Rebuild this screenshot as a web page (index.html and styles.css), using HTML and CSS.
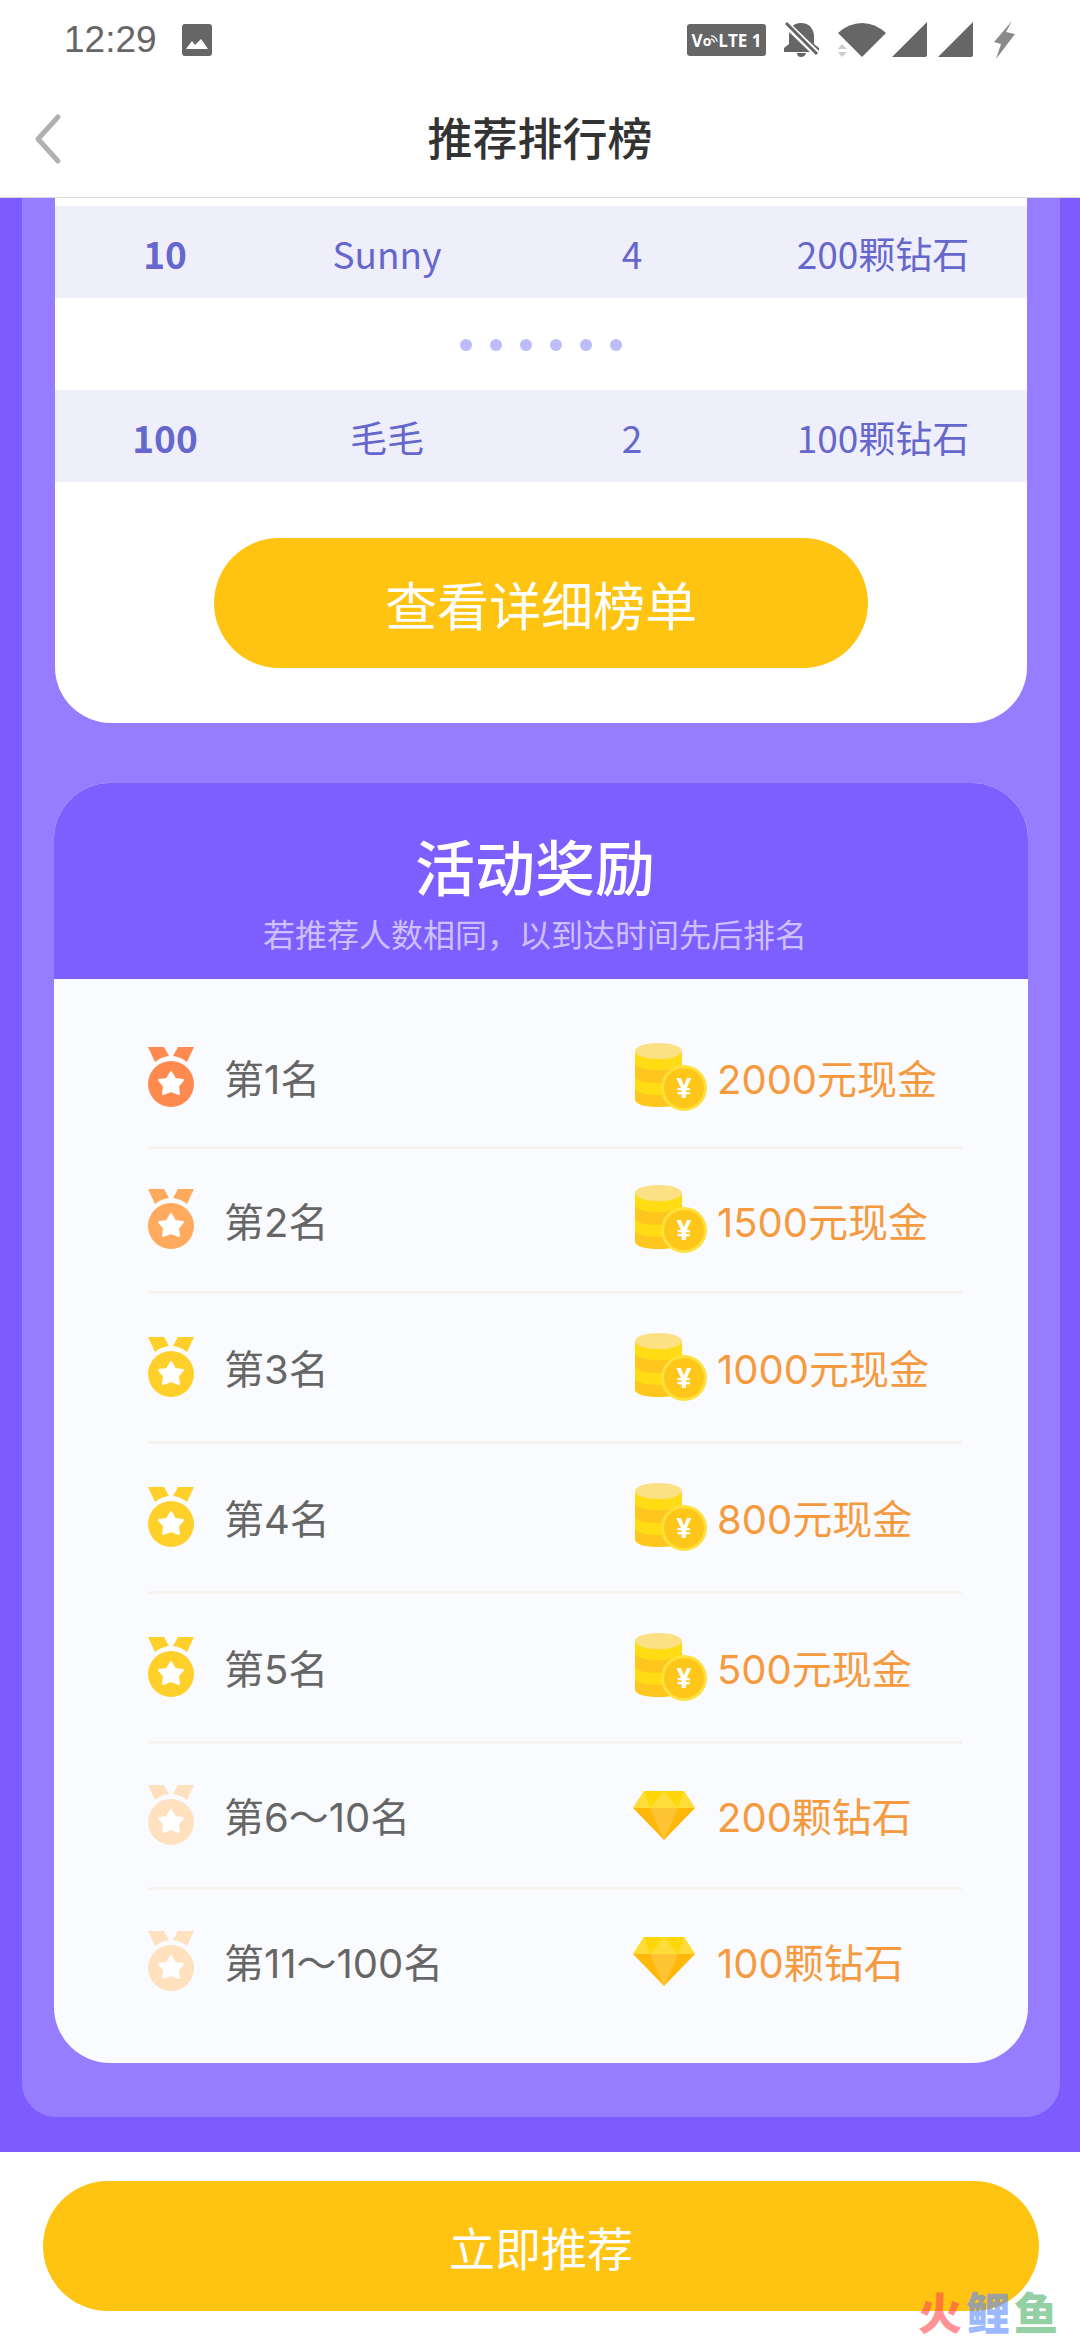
FILE: index.html
```html
<!DOCTYPE html>
<html lang="zh-CN">
<head>
    <meta charset="UTF-8">
    <meta name="viewport" content="width=device-width, initial-scale=1.0">
    <title>推荐排行榜</title>
    <link rel="stylesheet" href="styles.css">
</head>
<body>

    <!-- shared icons -->
    <svg class="sprite" aria-hidden="true">
        <symbol id="medal" viewBox="0 0 46 61">
            <path fill="currentColor" d="M0 0H16L21 9Q13 10 7 15ZM46 0H30L25 9Q33 10 39 15Z"/>
            <circle fill="currentColor" cx="23" cy="37" r="23"/>
            <path class="medal-star" d="M23 25L27 32L35 33L30 39L31 47L23 44L15 47L16 39L11 33L19 32Z"/>
        </symbol>
        <symbol id="coins" viewBox="0 0 76 69">
            <path fill="#ffc61e" d="M2 8V57Q4 64 26 64Q47 64 49 57V8Z"/>
            <path fill="#ffdc14" d="M2 8V20Q4 27 26 27Q47 27 49 20V8ZM2 33Q4 40 26 40Q47 40 49 33V45Q47 52 26 52Q4 52 2 45Z"/>
            <ellipse fill="#fbe184" cx="25.500" cy="8" rx="23.500" ry="8"/>
            <circle fill="#ffe03c" cx="51" cy="45" r="23"/>
            <circle fill="#ffc61a" cx="51" cy="45" r="20"/>
            <text class="coin-sign" x="51" y="55" text-anchor="middle">¥</text>
        </symbol>
        <symbol id="diamond" viewBox="0 0 62 49">
            <path fill="#ffd60a" d="M11 0H51L62 17H0Z"/>
            <path fill="#ffdd38" d="M31 0L45 17H17ZM11 0L17 17H0ZM51 0L62 17H45Z"/>
            <path fill="#ffb70a" d="M0 17H62L31 49Z"/>
            <path fill="#ffc433" d="M17 17H45L31 49Z"/>
        </symbol>
    </svg>

    <div class="status-bar">
        <span class="time">12:29</span>
        <svg class="photo-icon" width="30" height="32" viewBox="0 0 30 32">
            <rect width="30" height="32" rx="3" fill="#666"/>
            <path fill="#fff" d="M4 25L10 17L13 21L19 15L26 25Z"/>
        </svg>
        <div class="status-icons">
            <span class="volte">V<small>o</small><svg width="7" height="14" viewBox="0 0 8 14">
                <path fill="none" stroke="#fff" stroke-width="1.500" d="M0 6Q3 6 4 10M0 2Q6 3 7 9"/>
            </svg>LTE 1</span>
            <svg class="bell" width="36" height="36" viewBox="0 0 36 36">
                <path fill="#666" d="M0 30V26L5 22V13Q6 1 17 1Q28 1 30 13V22L35 26V30ZM13 31H22Q21 35 17 35Q13 35 13 31Z"/>
                <path stroke="#fff" stroke-width="7" d="M0 0L35 34"/>
                <path stroke="#666" stroke-width="3" d="M2 1L33 32"/>
            </svg>
            <svg class="wifi" width="48" height="36" viewBox="0 0 48 36">
                <path fill="#666" d="M0 11Q11 1 24 1Q37 1 48 11L24 35Z"/>
                <path fill="#ccc" d="M0 27L4 22L9 27ZM0 30H9L4 35Z"/>
            </svg>
            <svg class="signal" width="36" height="36" viewBox="0 0 36 36">
                <path fill="#666" d="M35 0V33Q35 35 33 35H0Z"/>
            </svg>
            <svg class="signal" width="36" height="36" viewBox="0 0 36 36">
                <path fill="#666" d="M35 0V33Q35 35 33 35H0Z"/>
            </svg>
            <svg class="bolt" width="24" height="38" viewBox="0 0 24 38">
                <path fill="#8a8a8a" d="M20 0L2 21L9 23L4 38L23 13L14 11Z"/>
            </svg>
        </div>
    </div>

    <header class="nav">
        <button class="back" type="button" aria-label="返回">
            <svg width="28" height="52" viewBox="0 0 28 52">
                <path fill="none" stroke="#b0b0b0" stroke-width="5" stroke-linecap="round" stroke-linejoin="round" d="M24 4L4 26L24 48"/>
            </svg>
        </button>
        <h1>推荐排行榜</h1>
    </header>

    <main class="page">
        <div class="panel">
            <section class="board">
                <table class="ranking">
                    <tr class="striped">
                        <th scope="row">10</th>
                        <td>Sunny</td>
                        <td>4</td>
                        <td>200颗钻石</td>
                    </tr>
                    <tr>
                        <td colspan="4">
                            <div class="dots"><i></i><i></i><i></i><i></i><i></i><i></i></div>
                        </td>
                    </tr>
                    <tr class="striped">
                        <th scope="row">100</th>
                        <td>毛毛</td>
                        <td>2</td>
                        <td>100颗钻石</td>
                    </tr>
                </table>
                <button class="btn btn-detail" type="button">查看详细榜单</button>
            </section>

            <section class="rewards">
                <div class="rewards-head">
                    <h2>活动奖励</h2>
                    <p>若推荐人数相同，以到达时间先后排名</p>
                </div>
                <table class="prizes">
                    <tr>
                        <td><div class="rank"><svg class="medal first"><use href="#medal"/></svg>第1名</div></td>
                        <td><div class="prize"><svg class="coins"><use href="#coins"/></svg>2000元现金</div></td>
                    </tr>
                    <tr>
                        <td><div class="rank"><svg class="medal second"><use href="#medal"/></svg>第2名</div></td>
                        <td><div class="prize"><svg class="coins"><use href="#coins"/></svg>1500元现金</div></td>
                    </tr>
                    <tr>
                        <td><div class="rank"><svg class="medal third"><use href="#medal"/></svg>第3名</div></td>
                        <td><div class="prize"><svg class="coins"><use href="#coins"/></svg>1000元现金</div></td>
                    </tr>
                    <tr>
                        <td><div class="rank"><svg class="medal third"><use href="#medal"/></svg>第4名</div></td>
                        <td><div class="prize"><svg class="coins"><use href="#coins"/></svg>800元现金</div></td>
                    </tr>
                    <tr>
                        <td><div class="rank"><svg class="medal third"><use href="#medal"/></svg>第5名</div></td>
                        <td><div class="prize"><svg class="coins"><use href="#coins"/></svg>500元现金</div></td>
                    </tr>
                    <tr>
                        <td><div class="rank"><svg class="medal other"><use href="#medal"/></svg>第6～10名</div></td>
                        <td><div class="prize"><svg class="diamond"><use href="#diamond"/></svg>200颗钻石</div></td>
                    </tr>
                    <tr>
                        <td><div class="rank"><svg class="medal other"><use href="#medal"/></svg>第11～100名</div></td>
                        <td><div class="prize"><svg class="diamond"><use href="#diamond"/></svg>100颗钻石</div></td>
                    </tr>
                </table>
            </section>
        </div>
    </main>

    <footer class="bottom-bar">
        <button class="btn btn-recommend" type="button">立即推荐</button>
        <div class="watermark"><span class="wm-red">火</span><span class="wm-blue">鲤</span><span class="wm-green">鱼</span></div>
    </footer>

</body>
</html>
```
FILE: styles.css
```css
* {
    box-sizing: border-box;
}

body {
    margin: 0;
    background-color: #fff;
    font-family: "Noto Sans CJK SC", sans-serif;
    color: #333;
}

h1, h2, p {
    margin: 0;
}

button {
    border: none;
    padding: 0;
    background: none;
    font-family: inherit;
    cursor: pointer;
}

svg {
    flex-shrink: 0;
}

table {
    border-collapse: collapse;
    table-layout: fixed;
}

.sprite {
    display: none;
}

/* status bar */
.status-bar {
    display: flex;
    align-items: center;
    height: 80px;
    padding: 0 64px;
}

.time {
    font-family: "Liberation Sans", sans-serif;
    font-size: 37px;
    color: #666;
}

.photo-icon {
    margin-left: 25px;
}

.status-icons {
    display: flex;
    align-items: center;
    margin-left: auto;
}

.volte {
    display: flex;
    align-items: center;
    justify-content: center;
    width: 79px;
    height: 32px;
    border-radius: 3px;
    background-color: #666;
    color: #fff;
    font-family: "Open Sans", sans-serif;
    font-size: 17px;
    font-weight: 700;
    white-space: pre;
}

.volte small {
    font-size: 14px;
}

.bell {
    margin-left: 18px;
}

.wifi {
    margin-left: 18px;
}

.signal {
    margin-left: 6px;
}

.signal + .signal {
    margin-left: 10px;
}

.bolt {
    margin-left: 18px;
}

/* title bar */
.nav {
    display: grid;
    grid-template-columns: 80px 1fr 80px;
    align-items: center;
    height: 118px;
    border-bottom: 1px solid #dcdcdc;
}

.back {
    display: flex;
    padding-left: 34px;
}

.nav h1 {
    padding-bottom: 4px;
    font-size: 45px;
    font-weight: 500;
    line-height: 60px;
    text-align: center;
}

/* purple area */
.page {
    padding: 0 20px 35px 22px;
    background-color: #7d5cff;
}

.panel {
    padding: 0 32px 54px;
    border-radius: 0 0 34px 34px;
    background-color: #967dff;
}

.board {
    margin: 0 1px 60px;
    padding: 8px 0 55px;
    border-radius: 0 0 56px 56px;
    background-color: #fff;
    text-align: center;
}

.ranking {
    width: 100%;
    margin-bottom: 56px;
    font-size: 37px;
    line-height: 52px;
    color: #6567cc;
}

.ranking th,
.ranking td {
    height: 92px;
    padding: 2px 0 0;
}

.ranking th {
    width: 220px;
    font-weight: 700;
}

.ranking td:nth-child(2) {
    width: 224px;
}

.ranking td:nth-child(3) {
    width: 266px;
}

.ranking td:nth-child(4) {
    padding-right: 26px;
}

.striped {
    background-color: #efeffb;
}

.dots {
    display: flex;
    justify-content: center;
    gap: 18px;
}

.dots i {
    width: 12px;
    height: 12px;
    border-radius: 50%;
    background-color: #bcbdfa;
}

.btn {
    height: 130px;
    border-radius: 65px;
    background-color: #ffc312;
    color: #fff;
}

.btn-detail {
    display: block;
    width: 654px;
    max-width: 100%;
    margin: 0 auto;
    font-size: 52px;
}

/* rewards */
.rewards {
    border-radius: 56px;
    background-color: #fafbff;
    overflow: hidden;
}

.rewards-head {
    padding: 38px 12px 22px 0;
    background-color: #7d5fff;
    text-align: center;
    color: #fff;
}

.rewards-head h2 {
    font-size: 60px;
    font-weight: 500;
    line-height: 88px;
}

.rewards-head p {
    font-size: 32px;
    line-height: 48px;
    color: #cdc0ff;
}

.prizes {
    width: calc(100% - 160px);
    margin: 30px 66px 30px 94px;
    font-family: Inter, "Noto Sans CJK SC", sans-serif;
    font-size: 40px;
}

.prizes tr {
    height: 150px;
    border-bottom: 3px solid #f8f3ec;
}

.prizes tr:nth-child(1) {
    height: 138px;
}

.prizes tr:nth-child(2),
.prizes tr:nth-child(7) {
    height: 145px;
}

.prizes tr:nth-child(6) {
    height: 146px;
}

.prizes tr:last-child {
    border-bottom: none;
}

.prizes td {
    padding: 0;
}

.prizes td:first-child {
    width: 485px;
}

.rank,
.prize {
    display: flex;
    align-items: center;
}

.rank {
    gap: 30px;
    color: #666;
}

.prize {
    color: #f59a3e;
}

.medal {
    width: 46px;
    height: 61px;
}

.medal-star {
    fill: #fff;
    stroke: #fff;
    stroke-width: 2px;
    stroke-linejoin: round;
}

.first { color: #ff8a50; }
.second { color: #ffaa5c; }
.third { color: #ffd029; }
.other { color: #ffe0bf; }

.coins {
    width: 76px;
    height: 69px;
    margin-right: 8px;
}

.coin-sign {
    fill: #fff;
    font-family: Roboto, sans-serif;
    font-size: 28px;
    font-weight: 700;
}

.diamond {
    width: 62px;
    height: 49px;
    margin-right: 22px;
}

/* bottom bar */
.bottom-bar {
    position: relative;
    padding: 29px 41px 28px 43px;
    background-color: #fff;
}

.btn-recommend {
    display: block;
    width: 100%;
    font-size: 46px;
}

/* the box keeps the full line height so no glyph is clipped */
.watermark {
    position: absolute;
    right: 22px;
    bottom: 0;
    display: flex;
    gap: 4px;
    font-size: 44px;
    font-weight: 900;
    line-height: 56px;
    opacity: 0.6;
}

.wm-red { color: #ff4a50; }
.wm-blue { color: #5c8cff; }
.wm-green { color: #4db36b; }
```
